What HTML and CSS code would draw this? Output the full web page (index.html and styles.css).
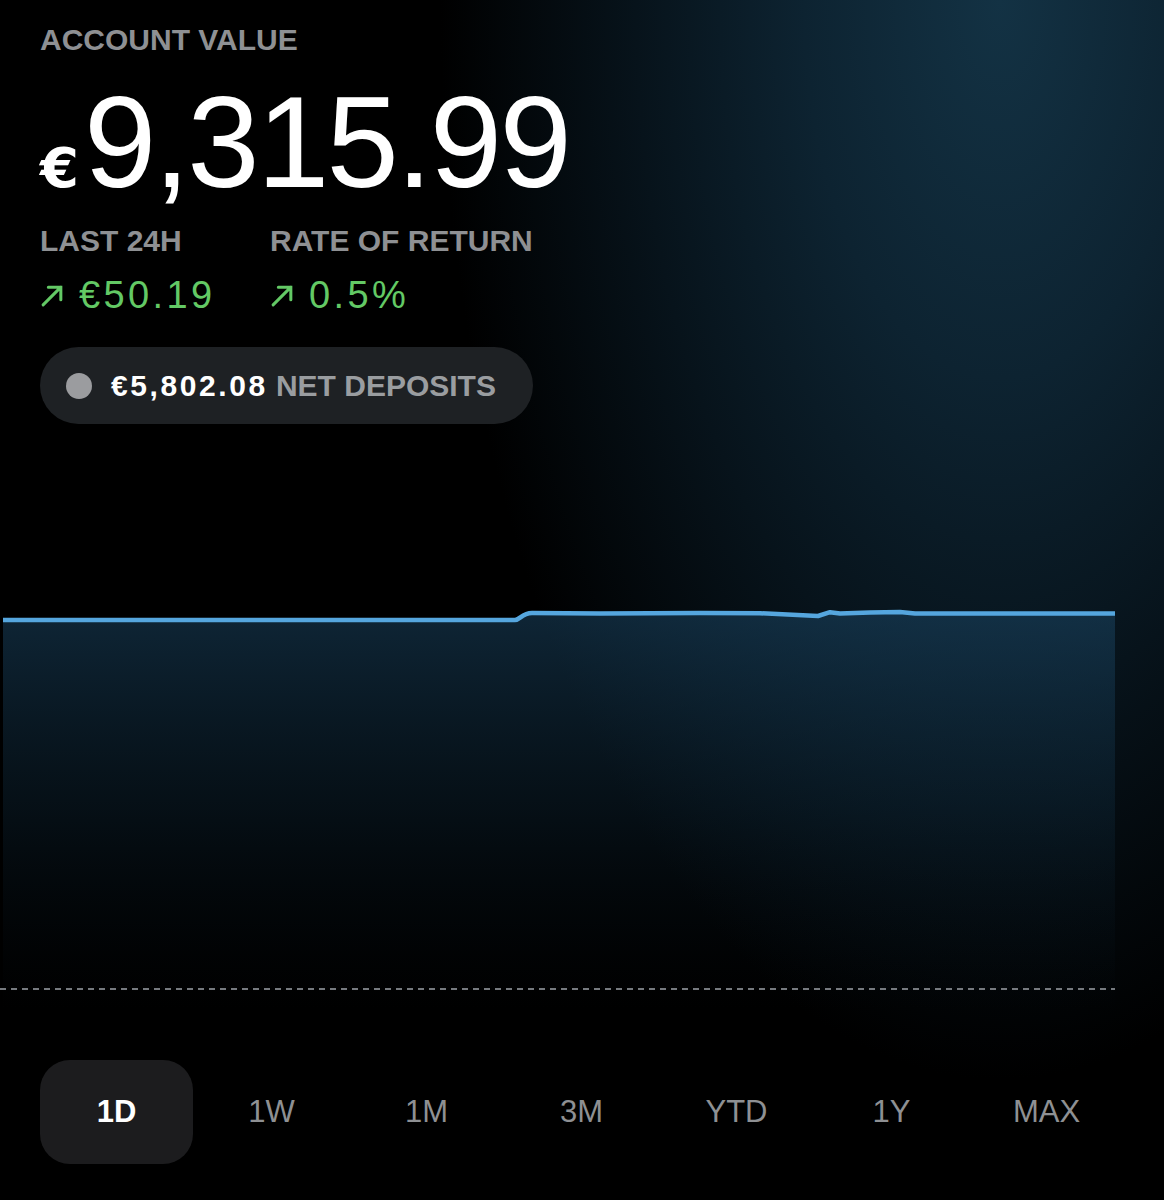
FILE: index.html
```html
<!DOCTYPE html>
<html>
<head>
<meta charset="utf-8">
<link rel="stylesheet" href="styles.css">
</head>
<body>
<div class="page">
  <header class="header">
    <div class="label">ACCOUNT VALUE</div>
    <div class="value"><span class="cur">€</span><span class="num">9,315.99</span></div>
    <div class="stats">
      <div class="stat">
        <div class="label sm">LAST 24H</div>
        <div class="gain">
          <svg class="arrow" viewBox="0 0 24 24"><path d="M3 21 L20 4 M8 4 H20 V16" /></svg>
          <span>€50.19</span>
        </div>
      </div>
      <div class="stat">
        <div class="label sm">RATE OF RETURN</div>
        <div class="gain">
          <svg class="arrow" viewBox="0 0 24 24"><path d="M3 21 L20 4 M8 4 H20 V16" /></svg>
          <span>0.5%</span>
        </div>
      </div>
    </div>
    <div class="pill">
      <span class="dot"></span>
      <span class="amt">€5,802.08</span>
      <span class="pill-label">NET DEPOSITS</span>
    </div>
  </header>

  <svg class="chart" viewBox="0 0 1164 450" width="1164" height="450">
    <defs>
      <linearGradient id="fill" x1="0" y1="0" x2="0" y2="1">
        <stop offset="0" stop-color="#1a4462" stop-opacity="0.55"/>
        <stop offset="0.5" stop-color="#123248" stop-opacity="0.3"/>
        <stop offset="1" stop-color="#0a1a26" stop-opacity="0"/>
      </linearGradient>
    </defs>
    <path class="area" d="M3 60 L515 60 C520 60 522 53 532 53 L600 53.5 L700 53 L760 53.2 L818 56 L830 52.2 L840 53.5 L870 52.6 L900 52 L915 53.5 L1115 53.5 L1115 450 L3 450 Z" fill="url(#fill)"/>
    <path class="line" d="M3 60 L515 60 C520 60 522 53 532 53 L600 53.5 L700 53 L760 53.2 L818 56 L830 52.2 L840 53.5 L870 52.6 L900 52 L915 53.5 L1115 53.5"/>
    <line class="base" x1="0" y1="429" x2="1115" y2="429"/>
  </svg>

  <nav class="ranges">
    <div class="range active">1D</div>
    <div class="range">1W</div>
    <div class="range">1M</div>
    <div class="range">3M</div>
    <div class="range">YTD</div>
    <div class="range">1Y</div>
    <div class="range">MAX</div>
  </nav>
</div>
</body>
</html>
```

FILE: styles.css
```css
html, body {
  margin: 0;
  padding: 0;
}
body {
  width: 1164px;
  height: 1200px;
  overflow: hidden;
  background-color: #000;
  background-image:
    radial-gradient(ellipse 560px 1080px at 1000px 0px, #133244 0%, #0d2331 35%, #07131b 65%, rgba(0,0,0,0) 100%);
  font-family: "Liberation Sans", Arial, sans-serif;
  color: #fff;
}
.page {
  display: flex;
  flex-direction: column;
}
.header {
  padding: 22px 0 0 40px;
  display: flex;
  flex-direction: column;
  align-items: flex-start;
}
.label {
  font-size: 30px;
  line-height: 36px;
  font-weight: 700;
  color: #8e9093;
}
.value {
  margin-top: 19px;
  display: flex;
  align-items: baseline;
  line-height: 130px;
  height: 130px;
}
.cur {
  font-family: "DejaVu Sans", sans-serif;
  font-weight: 700;
  font-size: 56px;
  margin-right: 5px;
}
.num {
  font-size: 130px;
  font-weight: 400;
  letter-spacing: -2.6px;
}
.stats {
  margin-top: 16px;
  display: grid;
  grid-template-columns: 230px auto;
}
.stat {
  display: flex;
  flex-direction: column;
}
.gain {
  margin-top: 14px;
  display: flex;
  align-items: center;
  height: 44px;
  font-size: 38px;
  line-height: 44px;
  color: #63c965;
  letter-spacing: 3.4px;
}
.arrow {
  width: 25px;
  height: 25px;
  margin-right: 14px;
  fill: none;
  stroke: #63c965;
  stroke-width: 2.9;
  stroke-linecap: round;
  stroke-linejoin: miter;
}
.pill {
  margin-top: 30px;
  height: 77px;
  width: 493px;
  box-sizing: border-box;
  border-radius: 39px;
  background: #1e2124;
  display: flex;
  align-items: center;
  padding-left: 26px;
  font-size: 30px;
  font-weight: 700;
}
.dot {
  width: 26px;
  height: 26px;
  border-radius: 50%;
  background: #9b9c9f;
  margin-right: 19px;
  flex: none;
}
.amt {
  color: #fff;
  letter-spacing: 2.6px;
  margin-right: 8px;
}
.pill-label {
  color: #9a9da0;
}
.chart {
  display: block;
  margin-top: 136px;
}
.line {
  fill: none;
  stroke: #55a6de;
  stroke-width: 4.5;
  stroke-linejoin: round;
}
.base {
  stroke: #767a7f;
  stroke-width: 2;
  stroke-dasharray: 6 5;
}
.ranges {
  margin-top: 50px;
  padding-left: 38px;
  display: grid;
  grid-template-columns: repeat(7, 155px);
}
.range {
  margin-left: 2px;
  width: 153px;
  height: 104px;
  border-radius: 30px;
  display: flex;
  align-items: center;
  justify-content: center;
  font-size: 31px;
  color: #8e9093;
}
.range.active {
  background: #1c1c1e;
  color: #fff;
  font-weight: 700;
}
```
